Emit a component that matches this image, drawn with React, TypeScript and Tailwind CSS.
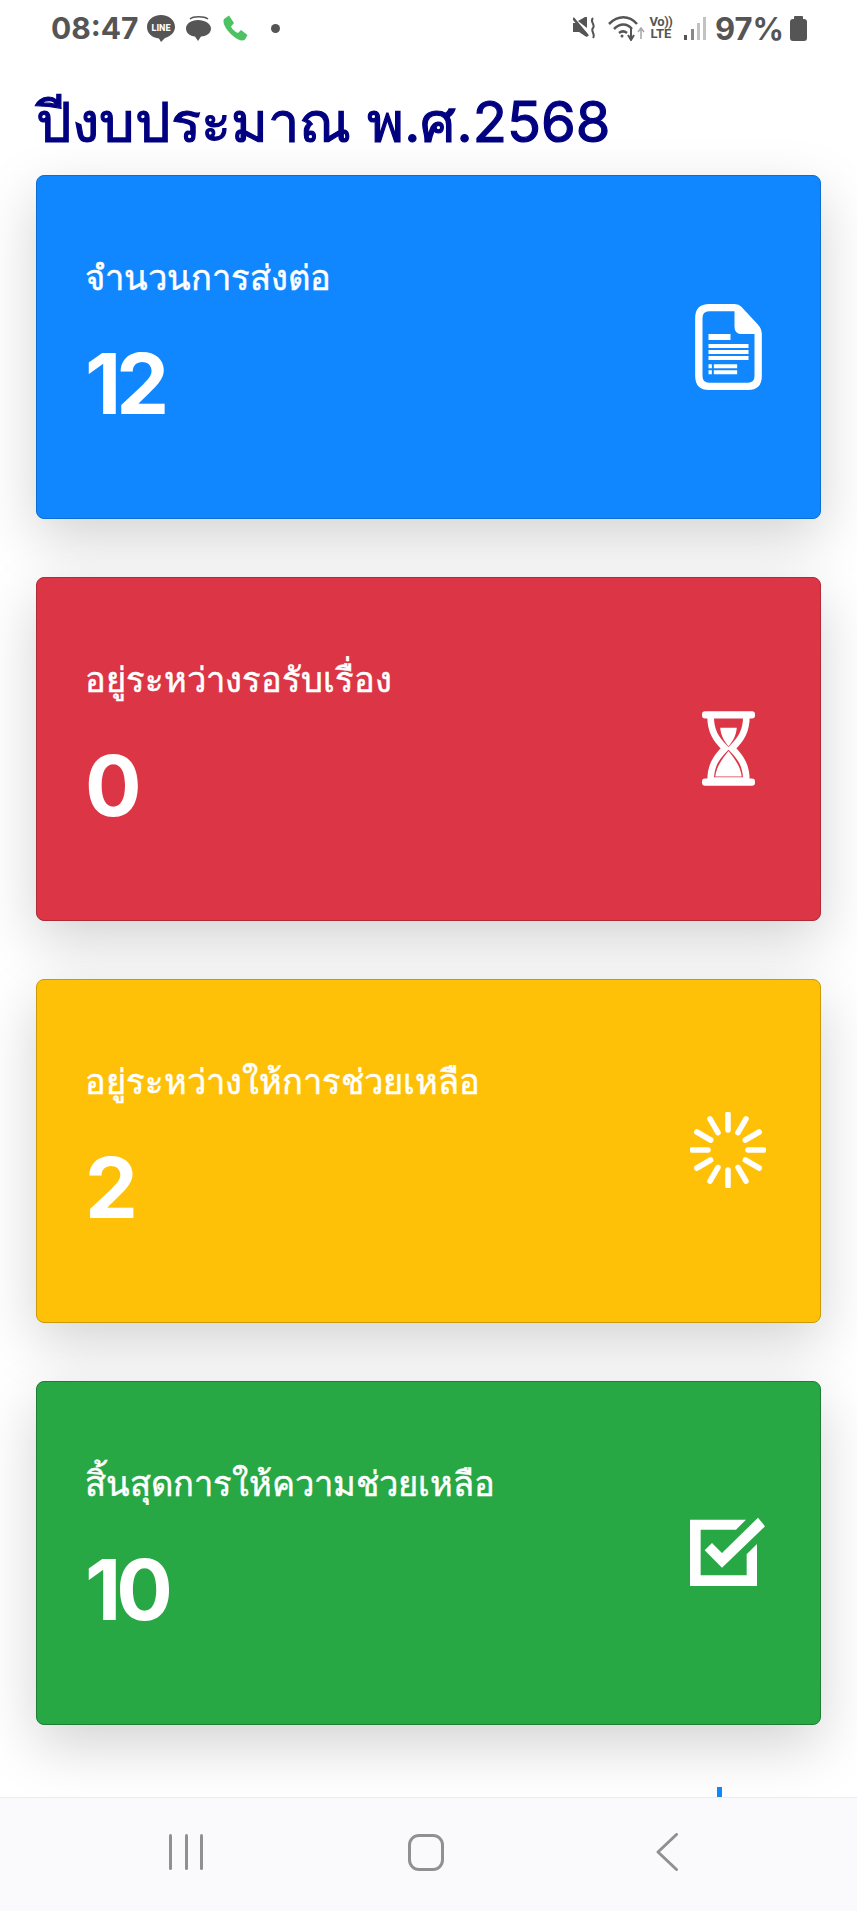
const cards = [
  { label: "จำนวนการส่งต่อ", value: "12", bg: "bg-[#1087ff]", border: "border-[#0a6fd0]", icon: <FileIcon /> },
  { label: "อยู่ระหว่างรอรับเรื่อง", value: "0", bg: "bg-[#dc3545]", border: "border-[#b02a37]", icon: <HourglassIcon /> },
  { label: "อยู่ระหว่างให้การช่วยเหลือ", value: "2", bg: "bg-[#ffc107]", border: "border-[#cc9a06]", icon: <SpinnerIcon /> },
  { label: "สิ้นสุดการให้ความช่วยเหลือ", value: "10", bg: "bg-[#28a745]", border: "border-[#1e7e34]", icon: <CheckIcon /> },
];

function FileIcon() {
  return (
    <svg width="67" height="86" viewBox="0 0 200 258" fill="none">
      <path d="M42 11H118Q126 11 132 17L180 69Q189 79 189 90V216Q189 247 158 247H42Q11 247 11 216V42Q11 11 42 11Z" stroke="white" strokeWidth="22" />
      <path d="M118 11L189 90H140Q118 90 118 68Z" fill="white" />
      <path d="M40 90H106V108H40ZM40 120H160V132H40ZM40 138H160V150H40ZM40 156H160V168H40ZM40 181H50V193H40ZM56 181H126V193H56ZM40 199H50V211H40ZM56 199H126V211H56Z" fill="white" />
    </svg>
  );
}

function HourglassIcon() {
  return (
    <svg width="53" height="75" viewBox="0 0 160 225" fill="none" className="-mt-[2px]">
      <rect x="0" y="0" width="160" height="22" rx="9" fill="white" />
      <rect x="0" y="203" width="160" height="22" rx="9" fill="white" />
      <path d="M26 16C26 60 42 85 70 112C42 140 26 165 26 209H134C134 165 118 140 90 112C118 85 134 60 134 16" stroke="white" strokeWidth="20" />
      <path d="M55 50H105C103 75 92 92 80 106C68 92 57 75 55 50Z" fill="white" />
      <path d="M80 120C64 140 44 165 40 197H120C116 165 96 140 80 120Z" fill="white" />
    </svg>
  );
}

function SpinnerIcon() {
  const spokes = Array.from({ length: 12 }, (_, i) => i * 30);
  return (
    <svg width="76" height="76" viewBox="-38 -38 76 76" fill="none" className="-mt-[3px]">
      {spokes.map((angle) => (
        <line key={angle} x1="0" y1="-36" x2="0" y2="-20" stroke="white" strokeWidth="5.5" strokeLinecap="round" transform={`rotate(${angle})`} />
      ))}
    </svg>
  );
}

function CheckIcon() {
  return (
    <svg width="75" height="69" viewBox="0 0 225 207" fill="none" className="-mt-[4px] -ml-[1px]">
      <path d="M0 8H168L138 38H32V175H170V112L201 81V207H0Z" fill="white" />
      <path d="M44 100L96 152L225 28L204 2L96 108L66 78Z" fill="white" />
    </svg>
  );
}

function LineBubble() {
  return (
    <svg width="30" height="29" viewBox="0 0 30 29">
      <path d="M15 1C7 1 1 6 1 13C1 19 6 24 13 24.500L15 28L19 24C25 22 29 18 29 13C29 6 23 1 15 1Z" fill="#555" />
      <text x="15" y="16.500" textAnchor="middle" fontSize="9" fontWeight="800" fill="white" fontFamily="Roboto, sans-serif">LINE</text>
    </svg>
  );
}

function ChatBubble() {
  return (
    <svg width="27" height="27" viewBox="0 0 27 27">
      <path d="M5 4C8 1 19 1 23 4" stroke="#555" strokeWidth="1.500" fill="none" />
      <path d="M13 5C6 5 1 9 1 13.500C1 18 5 21 10 21.500L13 26L16 21.500C22 21 26 18 26 13.500C26 9 20 5 13 5Z" fill="#555" />
    </svg>
  );
}

function PhoneGlyph() {
  return (
    <svg width="25" height="26" viewBox="0 0 25 26">
      <path d="M1 4L6 0.500L11 8L8 11.500C9 14 12 17 15 18L18 15L24.500 20L22 24.500C20 26.500 15 25.500 9.500 20.500C3 15 -1 8 1 4Z" fill="#4cc262" />
    </svg>
  );
}

function StatusRight() {
  return (
    <div className="flex items-center text-[#555]">
      <svg width="24" height="24" viewBox="0 0 24 24" className="mr-[11px]">
        <path d="M0 7H3L14 17V21L12 20L6 16H0Z" fill="#555" />
        <path d="M5 5L12 1H14V12Z" fill="#555" />
        <path d="M0 2L15 20" stroke="#555" strokeWidth="2.500" />
        <path d="M20 2C16 6 23 8 20 12C17 15 23 18 20 22" stroke="#555" strokeWidth="2" fill="none" />
      </svg>
      <svg width="30" height="26" viewBox="0 0 30 26" fill="none" className="mr-[-1px]">
        <path d="M1 9C10 0 21 0 29 9M6 14C12 8 19 8 24 14M11 18C13.500 16 16.500 16 19 18" stroke="#555" strokeWidth="2.500" />
        <circle cx="14" cy="21" r="1.500" fill="#555" />
        <path d="M23 13V24M20 20L23 25L26 20" stroke="#555" strokeWidth="2" />
      </svg>
      <svg width="8" height="12" viewBox="0 0 8 12" className="mr-[3px] mt-[10px]">
        <path d="M4 12V2M1 5L4 1L7 5" stroke="#aaa" strokeWidth="1.600" fill="none" />
      </svg>
      <div className="mr-[11px] flex w-[25px] flex-col items-center text-[13px] font-bold leading-[12px] [font-family:Roboto,sans-serif]">
        <span className="tracking-[-0.5px]">Vo))</span>
        <span>LTE</span>
      </div>
      <div className="mr-[9px] flex h-[23px] items-end gap-[3.500px]">
        <div className="h-[5px] w-[3px] bg-[#555]" />
        <div className="h-[11px] w-[3px] bg-[#888]" />
        <div className="h-[17px] w-[2.500px] bg-[#c2c2c2]" />
        <div className="h-[23px] w-[2.500px] bg-[#c2c2c2]" />
      </div>
      <span className="mr-[6px] text-[31px] font-bold leading-none [font-family:Inter,sans-serif]">97%</span>
      <div className="flex flex-col items-center">
        <div className="h-[3px] w-[9px] rounded-t-[1px] bg-[#555]" />
        <div className="h-[22px] w-[17px] rounded-[3px] bg-[#555]" />
      </div>
    </div>
  );
}

export default function App() {
  return (
    <div className="flex h-[1911px] w-[857px] flex-col overflow-hidden bg-white [font-family:Inter,'Noto_Sans',sans-serif]">
      <div className="flex h-[56px] shrink-0 items-center justify-between pl-[51px] pr-[50px]">
        <div className="flex items-center">
          <span className="mr-[7px] text-[30px] font-bold leading-none text-[#555] [font-family:Inter,sans-serif]">08:47</span>
          <LineBubble />
          <div className="ml-[9px]"><ChatBubble /></div>
          <div className="ml-[11px]"><PhoneGlyph /></div>
          <div className="ml-[23px] h-[9px] w-[9px] rounded-full bg-[#555]" />
        </div>
        <StatusRight />
      </div>

      <main className="flex-1 overflow-hidden px-9">
        <h1 className="mt-[26px] mb-[13px] text-[56px] font-normal leading-[80px] tracking-[0.05px] text-[#000080] [-webkit-text-stroke:1.2px_#000080]">ปีงบประมาณ พ.ศ.2568</h1>
        <div className="flex flex-col gap-[58px]">
          {cards.map((card) => (
            <div key={card.value} className={`flex h-[344px] items-center justify-between rounded-lg border pl-[48px] pr-[52px] text-white shadow-[0_20px_58px_rgba(0,0,0,0.175)] ${card.bg} ${card.border}`}>
              <div className="pb-[12px]">
                <p className="text-[34.500px] font-normal leading-[50px] [-webkit-text-stroke:0.5px_white]">{card.label}</p>
                <p className="mt-[36px] text-[84px] font-bold leading-[90px] tracking-[-5px] [font-family:Inter,sans-serif]">{card.value}</p>
              </div>
              <div className="flex w-[80px] justify-center">{card.icon}</div>
            </div>
          ))}
        </div>
      </main>

      <nav className="relative flex h-[114px] shrink-0 items-center border-t border-[#ececf0] bg-[#fafafd] pb-[5px] pl-[169px]">
        <div className="absolute -top-[11px] left-[717px] h-[10px] w-[5px] bg-[#1087ff]" />
        <div className="flex gap-[12.500px]">
          <div className="h-[36px] w-[3px] rounded-full bg-[#909090]" />
          <div className="h-[36px] w-[3px] rounded-full bg-[#909090]" />
          <div className="h-[36px] w-[3px] rounded-full bg-[#909090]" />
        </div>
        <div className="ml-[205px] h-[37px] w-[36px] rounded-[11px] border-[3px] border-[#909090]" />
        <svg width="22" height="38" viewBox="0 0 22 38" fill="none" className="ml-[212px]">
          <path d="M20.500 1.500L2 19L20.500 36.500" stroke="#909090" strokeWidth="3" strokeLinecap="round" strokeLinejoin="round" />
        </svg>
      </nav>
    </div>
  );
}
